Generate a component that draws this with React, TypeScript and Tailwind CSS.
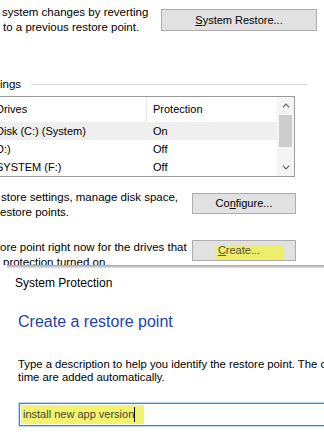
import React from 'react';

const Btn: React.FC<{ w: string; h: string; mt: string; children: React.ReactNode }> = ({ w, h, mt, children }) => (
  <div className={`relative flex items-center justify-center border border-[#adadad] bg-[#e1e1e1] text-[11px] ${w} ${h} ${mt}`}>
    {children}
  </div>
);

const Chevron: React.FC<{ up?: boolean }> = ({ up }) => (
  <svg width="8" height="5" viewBox="0 0 8 5" className="text-[#606060]">
    <path d={up ? 'M0.8 4.3 L4 1.1 L7.2 4.3' : 'M0.8 0.7 L4 3.9 L7.2 0.7'} fill="none" stroke="currentColor" strokeWidth="1.1" />
  </svg>
);

const drives = [
  { name: 'Disk (C:) (System)', prot: 'On', sel: true },
  { name: 'D:)', prot: 'Off', sel: false },
  { name: 'SYSTEM (F:)', prot: 'Off', sel: false },
];

function TopWindow() {
  return (
    <div className="h-[265px] overflow-hidden">
      {/* restore row */}
      <div className="flex pt-[5px]">
        <div className="w-[161px] pl-[2px] text-[11.5px] leading-[15px] whitespace-nowrap">
          <p>system changes by reverting</p>
          <p className="pl-[1px]">to a previous restore point.</p>
        </div>
        <Btn w="w-[156px]" h="h-[22px]" mt="mt-[4px]">
          <span><span className="underline">S</span>ystem Restore...</span>
        </Btn>
      </div>

      {/* group title */}
      <div className="mt-[42px] flex h-[14px] items-center">
        <span className="text-[11.5px] leading-[14px]">ings</span>
        <div className="ml-[10px] mr-[16px] h-px flex-1 bg-[#dcdcdc]" />
      </div>

      {/* drives list */}
      <div className="ml-[-1px] mt-[5px] flex h-[81px] w-[296px] border border-[#9a9a9a] text-[11px]">
        <div className="flex-1 overflow-hidden">
          <div className="flex h-[25px] items-center">
            <div className="w-[146px] whitespace-nowrap"><span className="ml-[-4px]">Drives</span></div>
            <div className="h-full w-px bg-[#e5e5e5]" />
            <div className="pl-[6px]">Protection</div>
          </div>
          {drives.map((d) => (
            <div key={d.name} className={`flex h-[18px] items-center ${d.sel ? 'bg-[#efefef]' : ''}`}>
              <div className="w-[147px] whitespace-nowrap"><span className="ml-[-4px]">{d.name}</span></div>
              <div className="pl-[6px]">{d.prot}</div>
            </div>
          ))}
        </div>
        <div className="flex w-[17px] flex-col bg-[#f4f4f4]">
          <div className="flex h-[17px] items-center justify-center"><Chevron up /></div>
          <div className="mx-[2px] mt-[1px] h-[32px] bg-[#cdcdcd]" />
          <div className="flex-1" />
          <div className="flex h-[17px] items-center justify-center"><Chevron /></div>
        </div>
      </div>

      {/* configure row */}
      <div className="mt-[13px] flex">
        <div className="w-[192px] text-[11.5px] leading-[15px] whitespace-nowrap">
          <p className="pl-[1px]">store settings, manage disk space,</p>
          <p>estore points.</p>
        </div>
        <Btn w="w-[104px]" h="h-[21px]" mt="mt-[3px]">
          <span>Co<span className="underline">n</span>figure...</span>
        </Btn>
      </div>

      {/* create row */}
      <div className="mt-[20px] flex">
        <div className="w-[192px] text-[11.5px] leading-[15px] whitespace-nowrap">
          <p>ore point right now for the drives that</p>
          <p className="pl-[3px]">protection turned on.</p>
        </div>
        <Btn w="w-[104px]" h="h-[21px]" mt="mt-0">
          <div className="absolute left-[22px] top-[4px] h-[15px] w-[68px] bg-[#eeee6c]" />
          <span className="relative ml-[-10px] text-[#4f4f3a]"><span className="underline">C</span>reate...</span>
        </Btn>
      </div>
    </div>
  );
}

function CreateDialog() {
  return (
    <div className="h-[171px]">
      <div className="ml-[7px] h-[3px] bg-gradient-to-b from-[#a3a3a3] to-[#e6e6e6]" />
      <p className="mt-[7px] pl-[15px] text-[12px] leading-[16px]">System Protection</p>
      <p className="mt-[20px] pl-[18px] text-[16px] leading-[22px] text-[#1f45a6]">Create a restore point</p>
      <p className="mt-[25px] pl-[18px] text-[11.3px] leading-[13px] whitespace-nowrap">
        Type a description to help you identify the restore point. The current date and
        <br />
        time are added automatically.
      </p>
      <div className="relative ml-[19px] mt-[19px] flex h-[23px] w-[320px] items-center border border-[#3385d6] shadow-[0_0_0_1px_#bcdaf3]">
        <div className="absolute left-px top-px h-[19px] w-[123px] bg-[#f3f36e]" />
        <span className="relative pl-[3px] text-[11px] text-[#45453a] whitespace-nowrap">install new app version</span>
        <span className="relative h-[15px] w-px bg-black" />
      </div>
    </div>
  );
}

export default function App() {
  return (
    <div className="h-[436px] w-[324px] overflow-hidden bg-white text-black font-['Liberation_Sans',Arial,sans-serif]">
      <TopWindow />
      <CreateDialog />
    </div>
  );
}
